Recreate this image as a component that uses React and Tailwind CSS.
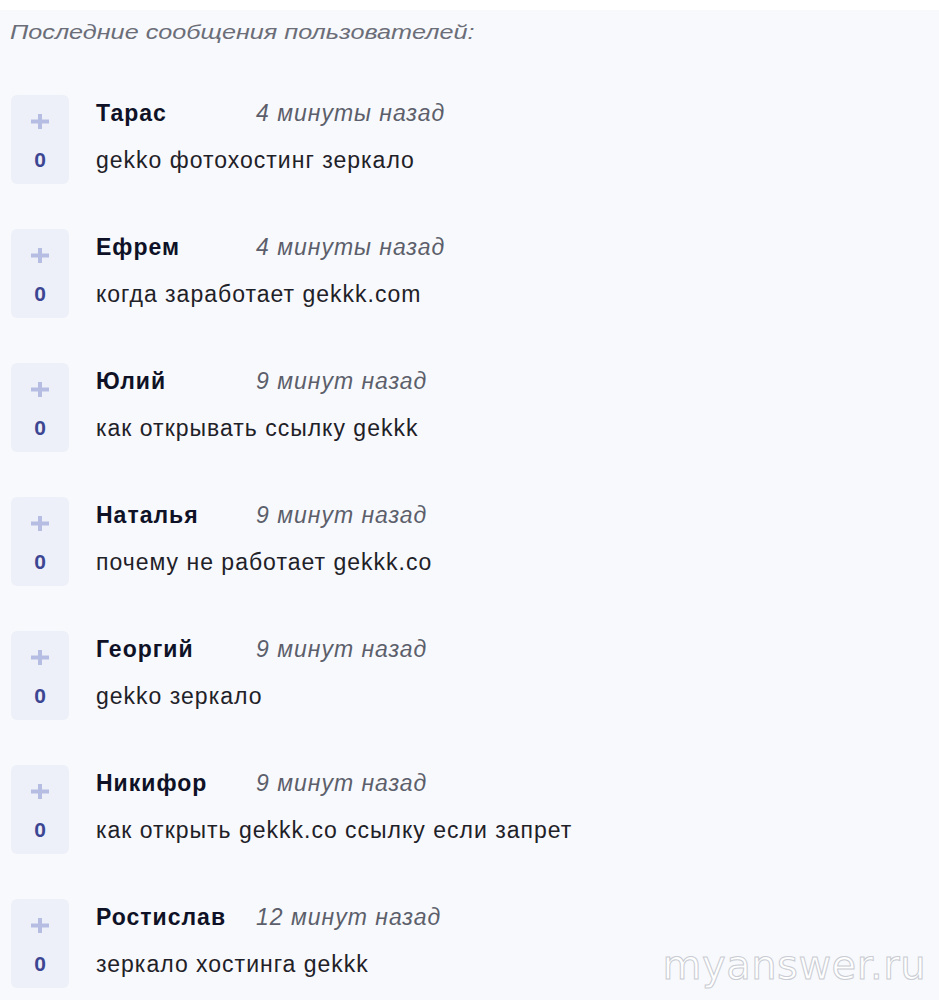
import React from "react";

const items = [
  { name: "Тарас", time: "4 минуты назад", text: "gekko фотохостинг зеркало" },
  { name: "Ефрем", time: "4 минуты назад", text: "когда заработает gekkk.com" },
  { name: "Юлий", time: "9 минут назад", text: "как открывать ссылку gekkk" },
  { name: "Наталья", time: "9 минут назад", text: "почему не работает gekkk.co" },
  { name: "Георгий", time: "9 минут назад", text: "gekko зеркало" },
  { name: "Никифор", time: "9 минут назад", text: "как открыть gekkk.co ссылку если запрет" },
  { name: "Ростислав", time: "12 минут назад", text: "зеркало хостинга gekkk" },
];

function Plus() {
  return (
    <svg width="18" height="15" viewBox="0 0 18 15" className="block">
      <rect x="7" y="0" width="4" height="15" fill="#b6bde3" />
      <rect x="0" y="5.5" width="18" height="4" fill="#b6bde3" />
    </svg>
  );
}

export default function App() {
  return (
    <div className="bg-white pt-[10px] min-h-[1000px] font-['Liberation_Sans',Arial,sans-serif]">
      <div className="bg-[#f8f9fc] min-h-[990px] relative">
        <div className="pl-[10px] pt-[9px] leading-[26px]">
          <span className="inline-block origin-left scale-x-[1.26] text-[20px] italic text-[#6b6e78]">
            Последние сообщения пользователей:
          </span>
        </div>
        <div className="flex flex-col gap-[45px] pt-[48px] pl-[11px]">
          {items.map((it, i) => (
            <div key={i} className="flex">
              <div className="w-[58px] h-[89px] rounded-[6px] bg-[#eef0f9] flex flex-col items-center pt-[19px]">
                <Plus />
                <div className="mt-[20px] text-[21px] font-bold text-[#3d4693] leading-[22px] tracking-[1px] pl-[1px]">0</div>
              </div>
              <div className="pl-[27px] pt-[4px] tracking-[1px]">
                <div className="flex items-center h-[28px]">
                  <span className="min-w-[130px] mr-[30px] text-[23px] font-bold text-[#0f1226]">{it.name}</span>
                  <span className="text-[23px] italic text-[#5c5f6b]">{it.time}</span>
                </div>
                <div className="mt-[19px] h-[28px] flex items-center text-[23px] text-[#1f2128]">{it.text}</div>
              </div>
            </div>
          ))}
        </div>
        <div className="absolute right-[13px] top-[935px] text-[40px] text-white leading-none [-webkit-text-stroke:1px_#c9ccd3] font-['DejaVu_Sans',sans-serif] tracking-[0.5px]">
          myanswer.ru
        </div>
      </div>
    </div>
  );
}
